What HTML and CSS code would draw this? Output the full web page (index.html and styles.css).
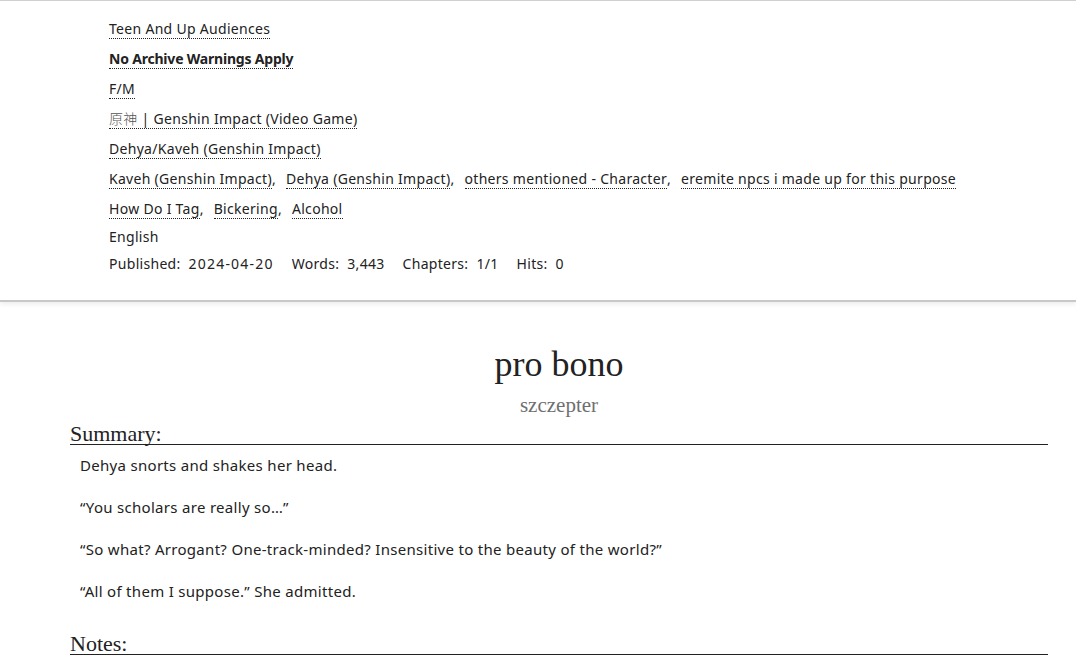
FILE: index.html
```html
<!DOCTYPE html>
<html lang="en">
<head>
<meta charset="utf-8">
<title>pro bono</title>
<link rel="stylesheet" href="styles.css">
</head>
<body>
<div class="meta">
  <div class="row"><a class="tag">Teen And Up Audiences</a></div>
  <div class="row"><a class="tag strong">No Archive Warnings Apply</a></div>
  <div class="row"><a class="tag">F/M</a></div>
  <div class="row"><a class="tag"><span class="cjk">原神</span> | Genshin Impact (Video Game)</a></div>
  <div class="row"><a class="tag">Dehya/Kaveh (Genshin Impact)</a></div>
  <ul class="row commas">
    <li><a class="tag">Kaveh (Genshin Impact)</a></li>
    <li><a class="tag">Dehya (Genshin Impact)</a></li>
    <li><a class="tag">others mentioned - Character</a></li>
    <li><a class="tag">eremite npcs i made up for this purpose</a></li>
  </ul>
  <ul class="row commas last-tags">
    <li><a class="tag">How Do I Tag</a></li>
    <li><a class="tag">Bickering</a></li>
    <li><a class="tag">Alcohol</a></li>
  </ul>
  <div class="row plain lang">English</div>
  <dl class="row plain stats">
    <dt>Published:</dt><dd class="date">2024-04-20</dd>
    <dt>Words:</dt><dd>3,443</dd>
    <dt>Chapters:</dt><dd>1/1</dd>
    <dt>Hits:</dt><dd>0</dd>
  </dl>
</div>

<div class="work">
  <h2 class="title">pro bono</h2>
  <h3 class="byline">szczepter</h3>
  <h3 class="heading">Summary:</h3>
  <div class="summary">
    <p>Dehya snorts and shakes her head.</p>
    <p>“You scholars are really so…”</p>
    <p>“So what? Arrogant? One-track-minded? Insensitive to the beauty of the world?”</p>
    <p>“All of them I suppose.” She admitted.</p>
  </div>
  <h3 class="heading">Notes:</h3>
</div>
</body>
</html>
```

FILE: styles.css
```css
html, body {
  margin: 0;
  padding: 0;
  background: #fff;
}

body {
  font-family: "Noto Sans", "Noto Sans CJK SC", sans-serif;
  font-size: 14px;
  color: #222;
}

.meta {
  border-top: 1px solid #d0d0d0;
  border-bottom: 2px solid #c8c8c8;
  box-shadow: 0 2px 5px rgba(0, 0, 0, 0.08);
  padding: 18px 0 26px 109px;
  letter-spacing: 0.3px;
}

.row {
  display: flex;
  flex-wrap: wrap;
  align-items: flex-start;
  line-height: 19px;
  margin: 0 0 10px 0;
  padding: 0;
  list-style: none;
}

.tag {
  display: inline-block;
  color: #222;
  text-decoration: none;
  border-bottom: 1px dotted #222;
}

.cjk {
  font-family: "Noto Sans CJK SC", sans-serif;
  color: #555;
  font-weight: 300;
}

.strong {
  font-weight: bold;
  letter-spacing: -0.2px;
}

.commas li {
  margin-right: 10px;
}

.commas li::after {
  content: ",";
}

.commas li:last-child::after {
  content: "";
}

.last-tags {
  margin-bottom: 8px;
}

.plain {
  line-height: 20px;
}

.lang {
  margin-bottom: 7px;
}

.stats {
  margin-bottom: 0;
}

.stats dt {
  margin: 0 8px 0 0;
}

.stats dd {
  margin: 0 18px 0 0;
}

.stats .date {
  letter-spacing: 1.2px;
}

.work {
  margin: 0 28px 0 70px;
}

.title {
  font-family: "Liberation Serif", serif;
  font-weight: normal;
  font-size: 36px;
  line-height: 40px;
  text-align: center;
  margin: 42px 0 0;
  color: #222;
}

.byline {
  font-family: "Liberation Serif", serif;
  font-weight: normal;
  font-size: 21px;
  line-height: 24px;
  text-align: center;
  color: #6f6f6f;
  margin: 9px 0 6px;
}

.heading {
  font-family: "Liberation Serif", serif;
  font-weight: normal;
  font-size: 22px;
  line-height: 21px;
  margin: 0;
  border-bottom: 1px solid #222;
  color: #222;
}

.summary {
  padding: 10px 0 0 10px;
  margin-bottom: 32px;
  font-size: 15px;
  letter-spacing: 0.3px;
}

.summary p {
  margin: 0 0 22px;
  line-height: 20px;
}

.summary p:last-child {
  margin-bottom: 0;
}
```
